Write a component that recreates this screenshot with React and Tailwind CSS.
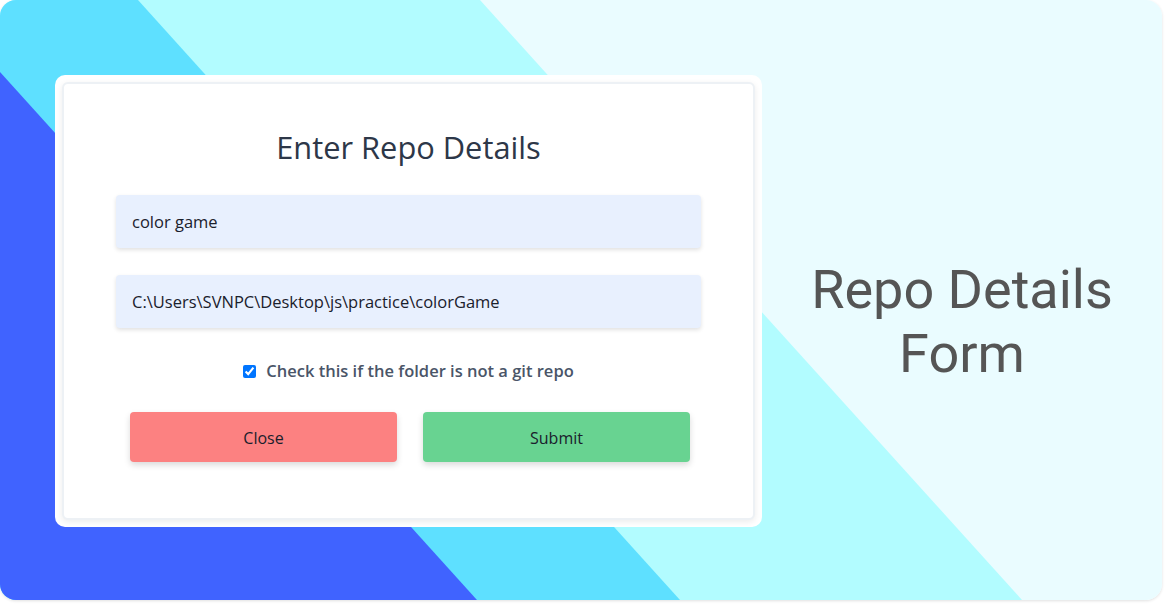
export default function App() {
  return (
    <div className="min-h-screen bg-white">
      <div className="relative w-[1162px] h-[600px] rounded-[16px] overflow-hidden shadow-[0_1px_3px_rgba(0,0,0,0.12)]">
        {/* diagonal stripes behind the content */}
        <svg
          className="absolute inset-0"
          width="1162"
          height="600"
          viewBox="0 0 1162 600"
          preserveAspectRatio="none"
        >
          <rect x="0" y="0" width="1162" height="600" fill="#eafcff" />
          <polygon points="0,0 480,0 1022,600 0,600" fill="#b2fcff" />
          <polygon points="0,0 138,0 680,600 0,600" fill="#5ee0ff" />
          <polygon points="0,72 477,600 0,600" fill="#4063ff" />
        </svg>

        <div className="relative flex h-full pl-[55px] pt-[75px]">
          <div className="w-[707px] h-[452px] bg-white rounded-[10px] p-[7px]">
            <div
              className="h-full flex flex-col items-center rounded-md border-2 border-[#edf1f5] bg-white shadow-[0_2px_6px_rgba(0,0,0,0.08)]"
              style={{ fontFamily: '"Open Sans", "Noto Sans", sans-serif' }}
            >
              <h1 className="pt-[43px] text-[30.8px] leading-[40px] text-[#2d3748]">
                Enter Repo Details
              </h1>

              <div className="w-full px-[52px] mt-[28px] flex flex-col gap-[27px]">
                <input
                  readOnly
                  defaultValue="color game"
                  className="w-full h-[53px] px-4 rounded bg-[#e8f0fe] text-[16.5px] text-[#1a202c] shadow-[0_2px_4px_rgba(0,0,0,0.12)] outline-none"
                />
                <input
                  readOnly
                  defaultValue="C:\Users\SVNPC\Desktop\js\practice\colorGame"
                  className="w-full h-[53px] px-4 rounded bg-[#e8f0fe] text-[16.5px] text-[#1a202c] shadow-[0_2px_4px_rgba(0,0,0,0.12)] outline-none"
                />
              </div>

              <label className="mt-[31px] flex items-center gap-[10px] h-6 text-[16.5px] font-semibold text-[#4a5568]">
                <input type="checkbox" defaultChecked className="w-[13px] h-[13px] accent-[#0075ff]" />
                Check this if the folder is not a git repo
              </label>

              <div className="w-full mt-[29px] pl-[66px] pr-[63px] flex gap-[26px]">
                <button className="flex-1 h-[50px] pt-[2px] rounded bg-[#fc8181] text-[16px] text-[#1a202c] shadow-[0_3px_6px_rgba(0,0,0,0.15)]">
                  Close
                </button>
                <button className="flex-1 h-[50px] pt-[2px] rounded bg-[#68d391] text-[16px] text-[#1a202c] shadow-[0_3px_6px_rgba(0,0,0,0.15)]">
                  Submit
                </button>
              </div>
            </div>
          </div>

          <div className="flex-1 flex items-center justify-center pt-[44px] pb-[75px]">
            <p
              className="text-center text-[54px] leading-[64px] text-[#555555]"
              style={{ fontFamily: 'Roboto, sans-serif' }}
            >
              Repo Details
              <br />
              Form
            </p>
          </div>
        </div>
      </div>
    </div>
  )
}
